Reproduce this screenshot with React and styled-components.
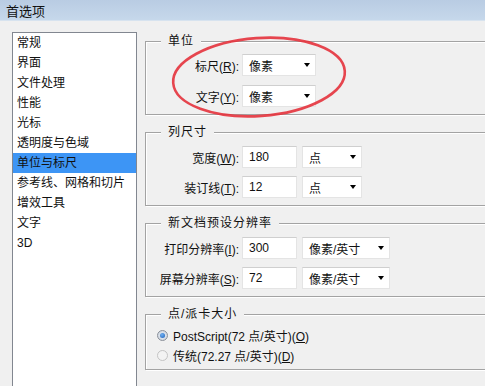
import React from 'react';
import styled, { createGlobalStyle } from 'styled-components';

const GlobalStyle = createGlobalStyle`
  html, body {
    margin: 0;
    padding: 0;
    background: #f0f0f0;
  }
  body {
    font-family: "Liberation Sans", "Noto Sans CJK SC", sans-serif;
    font-size: 12px;
    color: #111;
  }
`;

const navItems = [
  '常规', '界面', '文件处理', '性能', '光标', '透明度与色域',
  '单位与标尺', '参考线、网格和切片', '增效工具', '文字', '3D',
];

const Window = styled.div`
  position: relative;
  width: 485px;
  height: 386px;
  overflow: hidden;
  background: #f0f0f0;
`;

const TitleBar = styled.div`
  height: 20px;
  padding-left: 6px;
  display: flex;
  align-items: center;
  font-size: 13px;
  color: #111;
  background: linear-gradient(#b9cce3, #c6d8eb);
  border-bottom: 1px solid #d7e3ef;
`;

const Body = styled.div`
  display: flex;
  gap: 8px;
  padding: 11px 0 0 12px;
`;

const Sidebar = styled.ul`
  flex-shrink: 0;
  width: 125px;
  height: 400px;
  margin: 0;
  padding: 0;
  list-style: none;
  box-sizing: border-box;
  background: #fff;
  border: 1px solid #828790;
`;

const NavItem = styled.li`
  height: 20px;
  line-height: 20px;
  padding-left: 4px;
  font-size: 12px;
  white-space: nowrap;
  background: ${p => (p.$active ? '#3d95f5' : 'transparent')};
`;

const Content = styled.div`
  display: flex;
  flex-direction: column;
  gap: 17px;
  margin-top: 9px;
`;

const Group = styled.div`
  position: relative;
  flex-shrink: 0;
  width: 360px;
  box-sizing: border-box;
  padding: ${p => p.$pad || '13px 0 7px'};
  border: 1px solid #a3a3a3;
  box-shadow: inset 1px 1px 0 #fff, 1px 1px 0 #fff;
  display: flex;
  flex-direction: column;
  gap: ${p => p.$gap || '8px'};
`;

const Legend = styled.span`
  position: absolute;
  top: -9px;
  left: 15px;
  padding: 0 7px;
  line-height: 16px;
  letter-spacing: 1px;
  background: #f0f0f0;
`;

const Row = styled.div`
  display: flex;
  align-items: center;
  height: 22px;
`;

const Label = styled.label`
  width: 93px;
  padding-right: 3px;
  text-align: right;
  white-space: nowrap;
`;

const Field = styled.div`
  box-sizing: border-box;
  width: ${p => p.$w}px;
  height: 22px;
  margin-left: ${p => p.$gap || 0}px;
  padding: 0 5px 0 6px;
  display: flex;
  align-items: center;
  justify-content: space-between;
  background: #fff;
  border: 1px solid #e4e4e4;
  border-top-color: #cfcfcf;
  white-space: nowrap;
`;

const Caret = styled.span`
  width: 0;
  height: 0;
  border-left: 3.5px solid transparent;
  border-right: 3.5px solid transparent;
  border-top: 4px solid #000;
`;

const RadioRow = styled.div`
  display: flex;
  align-items: center;
  gap: 5px;
  height: 20px;
  padding-left: 11px;
  white-space: nowrap;
`;

const Radio = styled.span`
  position: relative;
  width: 11px;
  height: 11px;
  box-sizing: border-box;
  border-radius: 50%;
  border: 1px solid ${p => (p.$checked ? '#8a8f99' : '#c4c4c4')};
  background: ${p => (p.$checked ? 'radial-gradient(circle, #e8eef6, #c9d1dc)' : '#f3f3f3')};
  display: flex;
  align-items: center;
  justify-content: center;

  &::after {
    content: '';
    display: ${p => (p.$checked ? 'block' : 'none')};
    width: 5px;
    height: 5px;
    border-radius: 50%;
    background: radial-gradient(circle at 40% 35%, #6fb0f2, #1c5fb8);
  }
`;

const Mark = styled.svg`
  position: absolute;
  left: 0;
  top: 0;
  pointer-events: none;
`;

const Select = ({ w, gap, value }) => (
  <Field $w={w} $gap={gap}>
    <span>{value}</span>
    <Caret />
  </Field>
);

const App = () => {
  return (
    <Window>
      <GlobalStyle />
      <TitleBar>首选项</TitleBar>
      <Body>
        <Sidebar>
          {navItems.map((item, i) => (
            <NavItem key={i} $active={item === '单位与标尺'}>{item}</NavItem>
          ))}
        </Sidebar>

        <Content>
          <Group $pad="12px 0 7px" $gap="9px">
            <Legend>单位</Legend>
            <Row>
              <Label>标尺(<u>R</u>):</Label>
              <Select w={74} value="像素" />
            </Row>
            <Row>
              <Label>文字(<u>Y</u>):</Label>
              <Select w={74} value="像素" />
            </Row>
          </Group>

          <Group>
            <Legend>列尺寸</Legend>
            <Row>
              <Label>宽度(<u>W</u>):</Label>
              <Field $w={55}>180</Field>
              <Select w={60} gap={5} value="点" />
            </Row>
            <Row>
              <Label>装订线(<u>T</u>):</Label>
              <Field $w={55}>12</Field>
              <Select w={60} gap={5} value="点" />
            </Row>
          </Group>

          <Group>
            <Legend>新文档预设分辨率</Legend>
            <Row>
              <Label>打印分辨率(<u>I</u>):</Label>
              <Field $w={55}>300</Field>
              <Select w={88} gap={5} value="像素/英寸" />
            </Row>
            <Row>
              <Label>屏幕分辨率(<u>S</u>):</Label>
              <Field $w={55}>72</Field>
              <Select w={88} gap={5} value="像素/英寸" />
            </Row>
          </Group>

          <Group $pad="10px 0 4px" $gap="0px">
            <Legend>点/派卡大小</Legend>
            <RadioRow>
              <Radio $checked />
              <span>PostScript(72 点/英寸)(<u>O</u>)</span>
            </RadioRow>
            <RadioRow>
              <Radio />
              <span>传统(72.27 点/英寸)(<u>D</u>)</span>
            </RadioRow>
          </Group>
        </Content>
      </Body>

      {/* hand-drawn red annotation ring */}
      <Mark width="485" height="386">
        <ellipse
          cx="259"
          cy="77"
          rx="86"
          ry="39"
          transform="rotate(-4 259 77)"
          fill="none"
          stroke="#e4323c"
          strokeWidth="2.6"
          opacity="0.9"
        />
      </Mark>
    </Window>
  );
};

export default App;
